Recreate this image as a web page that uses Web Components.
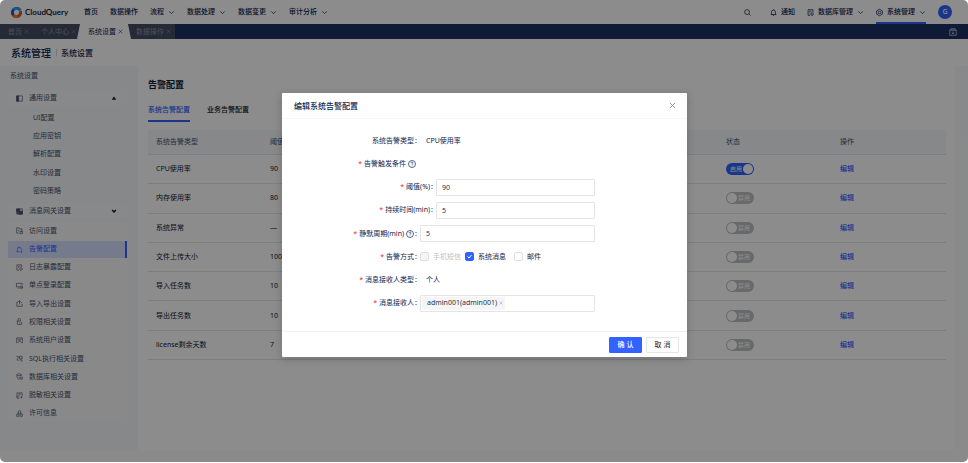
<!DOCTYPE html>
<html lang="zh-CN">
<head>
<meta charset="utf-8">
<title>CloudQuery</title>
<style>
html, body { margin: 0; min-height: 100%; background: #fff; }
body {
  font-family: "Noto Sans", "Noto Sans CJK SC", sans-serif;
  font-size: 7px; line-height: 12px; color: #0f244c;
}
</style>
</head>
<body>
<cq-app>
  <cq-topbar slot="top"></cq-topbar>
  <cq-tabstrip slot="top"></cq-tabstrip>
  <cq-sidebar slot="side"></cq-sidebar>
  <cq-alerts></cq-alerts>
  <cq-modal slot="overlay" heading="编辑系统告警配置">
    <cq-field label="系统告警类型" kind="text" value="CPU使用率"></cq-field>
    <cq-field label="告警触发条件" kind="none" required help></cq-field>
    <cq-field label="阈值(%)" kind="input" value="90" required indent></cq-field>
    <cq-field label="持续时间(min)" kind="input" value="5" required indent></cq-field>
    <cq-field label="静默周期(min)" kind="input" value="5" required help></cq-field>
    <cq-field label="告警方式" kind="checks" required></cq-field>
    <cq-field label="消息接收人类型" kind="text" value="个人" required></cq-field>
    <cq-field label="消息接收人" kind="tags" value="admin001(admin001)" required></cq-field>
  </cq-modal>
</cq-app>
<script>
const ICONS = {
  chevron: '<path d="M3 5.500l5 5 5-5"/>',
  close: '<path d="M2 2l12 12M14 2L2 14"/>',
  search: '<circle cx="7" cy="7" r="5.500"/><path d="M11 11l4 4"/>',
  bell: '<path d="M1.500 12.500h13M3.500 12.500V7a4.500 4.500 0 0 1 9 0v5.500M8 2.500V1M6.500 15h3"/>',
  dbgear: '<path d="M13.500 7V1.500h-11v13H7M5 5h5M5 8.500h2"/><circle cx="11.500" cy="11.500" r="3"/><path d="M11.500 11.500h.1"/>',
  gear: '<path d="M8 .5l6.500 3.700v7.600L8 15.500l-6.500-3.700V4.200z"/><circle cx="8" cy="8" r="3"/>',
  calendar: '<path d="M1.500 4.500h13v10h-13zM1.500 4.500l2-3h9l2 3M6 1.500v3M10 1.500v3M8 7v5M6 9.500l2 2.500 2-2.500"/>',
  panel: '<path d="M1.500 2h13v12h-13z"/><path d="M1.500 2H6v12H1.500z" fill="currentColor"/>',
  grid: '<path d="M1.500 2h13v12h-13zM1.500 8h13M8 2v12M10 5h3"/><path d="M1.500 2H8v6H1.500zM8 8h6.500v6H8zM3 10h4v3H3z" fill="currentColor"/>',
  visit: '<path d="M6 14H1.500V2H7l1.500 2.500h5V8M4 8h3"/><path d="M9 10h6v5H9zM12 8v4"/>',
  alert: '<path d="M1 13h7M3 13V7.500a4.500 4.500 0 0 1 9 0V9M7 3V1"/><path d="M12.500 10.500v3M11 12h3M11 15h3"/>',
  log: '<path d="M7 14H2V2h11v5M5 5h5M5 8h2"/><circle cx="11.500" cy="11.500" r="3"/>',
  login: '<path d="M7 11H1V3h13v4M4 14h3"/><path d="M9 9.500h6V14H9zM11 11.500h2"/>',
  transfer: '<path d="M5 5H2v9.500h12V9M8 10V1.500M5 4l3-2.500L11 4M11 6h3"/>',
  lock: '<path d="M2 7h9M3 14.500h10V9M3 14.500V7M4.500 7V4a3 3 0 0 1 6 0v3M8 10v2"/>',
  user: '<path d="M1.500 2h13M1.500 2v12M14.500 2v12"/><circle cx="8" cy="6.500" r="2"/><path d="M4 14c0-5 8-5 8 0M3 5h1.500M11.500 5H13"/>',
  sql: '<path d="M1 3h4v4M3 7v5h3M8 3h6v6H8zM11 9v5M14 12v3"/>',
  db: '<path d="M2 4c0-3 10-3 10 0s-10 3-10 0v5c0 2 3 2.500 4 2.500M12 4v3"/><path d="M8.500 9.500h6V14h-6zM4 14h2"/>',
  mask: '<path d="M2 2h12v7M2 2v12h6M5 5h6M5 8.500h3M2 11h4M10 12h5M12.500 9.500v5"/>',
  license: '<path d="M5 4.500a3 3 0 1 1 6 0v3H5zM1.500 14.500v-5h5v5zM9.500 14.500v-5h5v5zM5 7.500l-2 2M11 7.500l2 2"/>',
  help: '<circle cx="8" cy="8" r="7"/><path d="M6 6.500c0-3 4-3 4-.3 0 1.500-2 1.300-2 3.200M8 11.200v1"/>',
  up: '<path d="M2 12.500l6-8.500 6 8.500z" fill="currentColor" stroke="none"/>'
};

function define(name, build) {
  customElements.define(name, class extends HTMLElement {
    constructor() { super(); this.attachShadow({ mode: 'open' }); }
    connectedCallback() {
      const t = document.createElement('template');
      t.innerHTML = build(this);
      this.shadowRoot.replaceChildren(t.content.cloneNode(true));
    }
  });
}

define('cq-icon', el => `<style>
:host { display: inline-flex; flex: none; width: 7px; height: 7px; }
svg { width: 100%; height: 100%; display: block; fill: none; stroke: currentColor; stroke-width: var(--w, 1.7); overflow: visible; }
</style><svg viewBox="0 0 16 16" aria-hidden="true">${ICONS[el.getAttribute('name')]}</svg>`);

define('cq-app', () => `<style>
:host { display: flex; flex-direction: column; min-height: calc(100vh - 1px); position: relative; border-radius: 5px; overflow: hidden; background: #fff; }
.crumb { display: flex; align-items: center; height: 27px; padding-left: 11px; font-size: 8px; font-weight: 500; box-sizing: border-box; }
.crumb b { font-size: 10px; font-weight: 500; }
.crumb i { width: 1px; height: 7px; margin: 0 4px 0 5px; background: #d3d8e0; }
.body { flex: 1; display: grid; grid-template-columns: 138px minmax(0, 1fr); padding: 0 13px 12px 0; background: linear-gradient(#f8fafb, #fcfcfd); }
</style>
<slot name="top"></slot>
<nav class="crumb" aria-label="位置"><b>系统管理</b><i></i><span>系统设置</span></nav>
<div class="body"><slot name="side"></slot><slot></slot></div>
<slot name="overlay"></slot>`);

define('cq-menu-item', el => `<style>
:host { display: flex; }
a { display: flex; align-items: center; height: 24px; box-sizing: border-box; gap: 4px; color: inherit; text-decoration: none; font-weight: 500; border-bottom: 2px solid transparent; border-top: 2px solid transparent; }
:host([active]) a { border-bottom-color: #3262ff; }
</style><a href="#"><slot name="icon"></slot><slot></slot>${el.hasAttribute('drop') ? '<cq-icon name="chevron"></cq-icon>' : ''}</a>`);

define('cq-topbar', () => `<style>
:host { display: flex; align-items: center; height: 24px; padding: 0 16px 0 11px; background: #fff; }
.logo { display: flex; align-items: center; gap: 3px; width: 73px; font: 700 8px/12px Lato, sans-serif; }
.logo svg { width: 11px; height: 11px; }
nav { display: flex; gap: 12px; }
.end { margin-left: auto; display: flex; align-items: center; gap: 12px; }
button { border: 0; padding: 0; background: none; color: inherit; display: flex; }
.search { margin-right: 7px; }
.avatar { width: 14px; height: 14px; border-radius: 50%; background: #3262ff; color: #fff; font: 500 7px/14px "Noto Sans", sans-serif; justify-content: center; }
</style>
<div class="logo"><svg viewBox="0 0 22 22" fill="none" stroke-width="6" aria-hidden="true">
<path d="M18.500 7A8 8 0 0 0 5 5.500" stroke="#2f9be8"/><path d="M5.500 5A8 8 0 0 0 5 16.500" stroke="#2456c8"/><path d="M4.500 16A8 8 0 0 0 15 18" stroke="#e8762c"/><path d="M14 18.500A8 8 0 0 0 18.500 8" stroke="#d8532f"/><circle cx="11" cy="11" r="4" fill="#fff"/></svg>CloudQuery</div>
<nav aria-label="主导航">
<cq-menu-item>首页</cq-menu-item><cq-menu-item>数据操作</cq-menu-item><cq-menu-item drop>流程</cq-menu-item><cq-menu-item drop>数据处理</cq-menu-item><cq-menu-item drop>数据变更</cq-menu-item><cq-menu-item drop>审计分析</cq-menu-item>
</nav>
<div class="end">
<button class="search" aria-label="搜索"><cq-icon name="search"></cq-icon></button>
<cq-menu-item><cq-icon slot="icon" name="bell"></cq-icon>通知</cq-menu-item>
<cq-menu-item drop><cq-icon slot="icon" name="dbgear"></cq-icon>数据库管理</cq-menu-item>
<cq-menu-item drop active><cq-icon slot="icon" name="gear"></cq-icon>系统管理</cq-menu-item>
<button class="avatar">G</button>
</div>`);

define('cq-tabstrip', () => `<style>
:host { display: flex; align-items: center; height: 15px; background: #1c3163; padding-right: 11px; color: #8993a8; }
.tabs { display: flex; height: 15px; background: #454e63; }
.tab { display: flex; align-items: center; gap: 2px; padding: 0 4px 0 8px; }
.tab a { color: inherit; text-decoration: none; }
.tab cq-icon { width: 5px; height: 5px; }
button { border: 0; padding: 0; background: none; color: inherit; display: flex; }
.on { margin: 0 -3px; padding: 0 8px 0 11px; background: #fff; color: #0f244c; clip-path: polygon(3px 0, calc(100% - 3px) 0, 100% 100%, 0 100%); }
.tools { margin-left: auto; color: #c3cbdc; --w: 1.500; }
.tools cq-icon { width: 8px; height: 8px; }
</style>
<div class="tabs">
<div class="tab"><a href="#">首页</a><button aria-label="关闭"><cq-icon name="close"></cq-icon></button></div>
<div class="tab"><a href="#">个人中心</a><button aria-label="关闭"><cq-icon name="close"></cq-icon></button></div>
<div class="tab on"><a href="#">系统设置</a><button aria-label="关闭"><cq-icon name="close"></cq-icon></button></div>
<div class="tab"><a href="#">数据操作</a><button aria-label="关闭"><cq-icon name="close"></cq-icon></button></div>
</div>
<button class="tools" aria-label="标签页管理"><cq-icon name="calendar"></cq-icon></button>`);

const SIDE = [['visit', '访问设置'], ['alert', '告警配置'], ['log', '日志暴露配置'], ['login', '单点登录配置'], ['transfer', '导入导出设置'], ['lock', '权限相关设置'], ['user', '系统用户设置'], ['sql', 'SQL执行相关设置'], ['db', '数据库相关设置'], ['mask', '脱敏相关设置'], ['license', '许可信息']];

define('cq-sidebar', () => `<style>
:host { display: block; box-sizing: border-box; padding: 4px 11px 0 8px; background: #f4f7fa; color: #46536b; --w: 1.500; }
h2 { margin: 0 2px 8px; font-size: 7px; line-height: 12px; font-weight: 400; }
a, button { display: flex; align-items: center; gap: 6px; box-sizing: border-box; width: 100%; padding: 0 10px 0 8px; border: 0; background: none; font: inherit; color: inherit; text-decoration: none; text-align: left; }
button { height: 16px; background: #f9fafb; }
button .arrow { margin-left: auto; color: #0f1a30; width: 6px; height: 6px; --w: 4; }
.sub { display: grid; grid-auto-rows: 1fr; min-height: 91px; margin: 3px 0; }
.sub a { padding-left: 25px; }
.list { display: grid; grid-auto-rows: 1fr; min-height: 201px; margin-top: 3px; background: #f9fafb; }
.list a { border-bottom: 1px solid #f6f8fa; }
.list a.on { background: #d8e1ff; color: #3262ff; border-right: 2px solid #3262ff; margin: 1px 0; border-bottom: 0; }
</style>
<h2>系统设置</h2>
<button aria-expanded="true"><cq-icon name="panel"></cq-icon>通用设置<cq-icon class="arrow" name="up"></cq-icon></button>
<nav class="sub" aria-label="通用设置"><a href="#">UI配置</a><a href="#">应用密钥</a><a href="#">解析配置</a><a href="#">水印设置</a><a href="#">密码策略</a></nav>
<button aria-expanded="false"><cq-icon name="grid"></cq-icon>消息网关设置<cq-icon class="arrow" name="chevron"></cq-icon></button>
<nav class="list" aria-label="系统设置">${SIDE.map(([i, t]) => `<a href="#"${i === 'alert' ? ' class="on" aria-current="page"' : ''}><cq-icon name="${i}"></cq-icon>${t}</a>`).join('')}</nav>`);

define('cq-switch', el => {
  const on = el.hasAttribute('on');
  return `<style>
:host { display: inline-flex; vertical-align: middle; }
label { display: flex; align-items: center; justify-content: space-between; flex-direction: row-reverse; width: 28px; height: 12px; box-sizing: border-box; padding: 0 4px 0 1px; border-radius: 6px; background: #bfbfbf; color: #fff; font-size: 6px; line-height: 12px; }
input { appearance: none; margin: 0; width: 10px; height: 10px; border-radius: 50%; background: #fff; }
:host([on]) label { flex-direction: row; background: #3262ff; padding: 0 1px 0 4px; }
</style><label><span>${on ? '启用' : '禁用'}</span><input type="checkbox" role="switch" ${on ? 'checked' : ''}></label>`;
});

const ROWS = [['CPU使用率', '90'], ['内存使用率', '80'], ['系统异常', '—'], ['文件上传大小', '100'], ['导入任务数', '10'], ['导出任务数', '10'], ['license剩余天数', '7']];

define('cq-alerts', () => `<style>
:host { display: block; min-width: 0; padding: 12px 9px 0 10px; background: #fff; color: #0e1830; }
h1 { margin: 0 0 12px; font-size: 9px; line-height: 14px; font-weight: 700; }
.tabs { display: flex; gap: 17px; margin-bottom: 8px; }
.tabs button { border: 0; border-bottom: 2px solid transparent; padding: 0 0 4px; background: none; font: inherit; font-weight: 500; color: inherit; }
.tabs .on { color: #3262ff; border-color: #3262ff; }
table { width: 100%; height: 230px; table-layout: fixed; border-collapse: collapse; }
th, td { padding: 0 8px; text-align: left; border-bottom: 1px solid #e0e3e6; white-space: nowrap; }
th { height: 24px; background: #f4f7fa; font-weight: 400; color: #46536b; }
td a { color: #3262ff; text-decoration: none; font-weight: 500; }
</style>
<h1>告警配置</h1>
<div class="tabs" role="tablist"><button class="on" role="tab" aria-selected="true">系统告警配置</button><button role="tab">业务告警配置</button></div>
<table><thead><tr><th>系统告警类型</th><th>阈值(%)</th><th></th><th></th><th></th><th>状态</th><th>操作</th></tr></thead>
<tbody>${ROWS.map(([n, v], i) => `<tr><td>${n}</td><td>${v}</td><td></td><td></td><td></td><td><cq-switch${i ? '' : ' on'}></cq-switch></td><td><a href="#">编辑</a></td></tr>`).join('')}</tbody></table>`);

define('cq-modal', el => `<style>
:host { position: absolute; inset: 0; display: flex; justify-content: center; align-items: flex-start; padding: 93px 0 0 1px; background: rgba(0, 0, 0, .45); }
section { width: 405px; max-width: 100%; background: #fff; border-radius: 1px; box-shadow: 0 2px 8px rgba(0, 0, 0, .2); }
header { display: flex; align-items: center; justify-content: space-between; height: 26px; box-sizing: border-box; padding: 0 11px 0 12px; border-bottom: 1px solid #f7f7f7; }
h2 { margin: 0; font-size: 8px; font-weight: 500; }
header button { border: 0; padding: 0; background: none; color: #777; display: flex; }
header cq-icon { width: 7px; height: 7px; }
form { display: grid; grid-auto-rows: 1fr; min-height: 186px; padding: 10px 92px 16px 0; }
footer { display: flex; justify-content: flex-end; align-items: center; gap: 4px; height: 26px; box-sizing: border-box; padding: 0 8px; border-top: 1px solid #f0f0f0; }
footer button { width: 33px; height: 16px; box-sizing: border-box; padding: 0; border: 1px solid #e6e6e6; border-radius: 1px; background: #fff; font: inherit; color: #1c2333; }
footer .ok { background: #3262ff; border-color: #3262ff; color: #fff; font-weight: 500; }
</style>
<section role="dialog" aria-labelledby="t">
<header><h2 id="t">${el.getAttribute('heading')}</h2><button aria-label="关闭"><cq-icon name="close"></cq-icon></button></header>
<form><slot></slot></form>
<footer><button class="ok">确 认</button><button>取 消</button></footer>
</section>`);

define('cq-field', el => {
  const kind = el.getAttribute('kind'), value = el.getAttribute('value') || '', label = el.getAttribute('label');
  const help = el.hasAttribute('help') ? '<cq-icon name="help"></cq-icon>' : '';
  const colon = kind === 'none' ? '' : '<span>:</span>';
  const body = {
    none: '',
    text: `<output id="c">${value}</output>`,
    input: `<input id="c" class="box" value="${value}">`,
    checks: `<div class="checks" role="group" aria-label="${label}"><label class="off"><input type="checkbox" disabled>手机短信</label><label><input type="checkbox" checked>系统消息</label><label><input type="checkbox">邮件</label></div>`,
    tags: `<div class="box tags"><span class="tag">${value}<button type="button" aria-label="移除"><cq-icon name="close"></cq-icon></button></span><input id="c"></div>`
  }[kind];
  return `<style>
:host { display: grid; grid-template-columns: 138px minmax(0, 1fr); align-items: center; }
:host([indent]) { grid-template-columns: 154px minmax(0, 1fr); }
.name { display: flex; align-items: center; justify-content: flex-end; gap: 2px; padding-right: 3px; }
.name span { margin-left: -1px; }
:host([kind="none"]) .name { padding-right: 4px; }
.name cq-icon { width: 8px; height: 8px; --w: 1.400; }
:host([required]) .name::before { content: "*"; color: #f5222d; }
output { padding-left: 6px; }
input { font: inherit; color: #2b3346; }
.box { width: 100%; height: 17px; box-sizing: border-box; margin: 0; padding: 0 5px; border: 1px solid #e2e4e8; border-radius: 1px; background: #fff; outline: 0; }
.checks { display: flex; gap: 8px; }
.checks label { display: flex; align-items: center; gap: 4px; }
.checks .off { color: #bfbfbf; margin-right: -4px; }
.checks input { appearance: none; margin: 0; width: 9px; height: 9px; box-sizing: border-box; border: 1px solid #dcdee2; border-radius: 2px; background: #fff; }
.checks input:disabled { background: #f5f5f5; }
.checks input:checked { border-color: #3262ff; background: #3262ff url("data:image/svg+xml,%3Csvg xmlns='http://www.w3.org/2000/svg' viewBox='0 0 14 14'%3E%3Cpath d='M3 7l3 3 5-6' fill='none' stroke='white' stroke-width='2'/%3E%3C/svg%3E") center/100%; }
.tags { display: flex; align-items: center; padding: 0 1px; }
.tag { display: flex; align-items: center; gap: 2px; height: 13px; padding: 0 2px 0 5px; background: #f5f5f5; color: #2b3346; flex: none; }
.tag button { display: flex; border: 0; padding: 0; background: none; color: #888; }
.tag cq-icon { width: 4px; height: 4px; }
.tags input { flex: 1; min-width: 0; border: 0; padding: 0; background: none; outline: 0; }
</style><label class="name" for="c">${label}${help}${colon}</label>${body}`;
});
</script>
</body>
</html>
